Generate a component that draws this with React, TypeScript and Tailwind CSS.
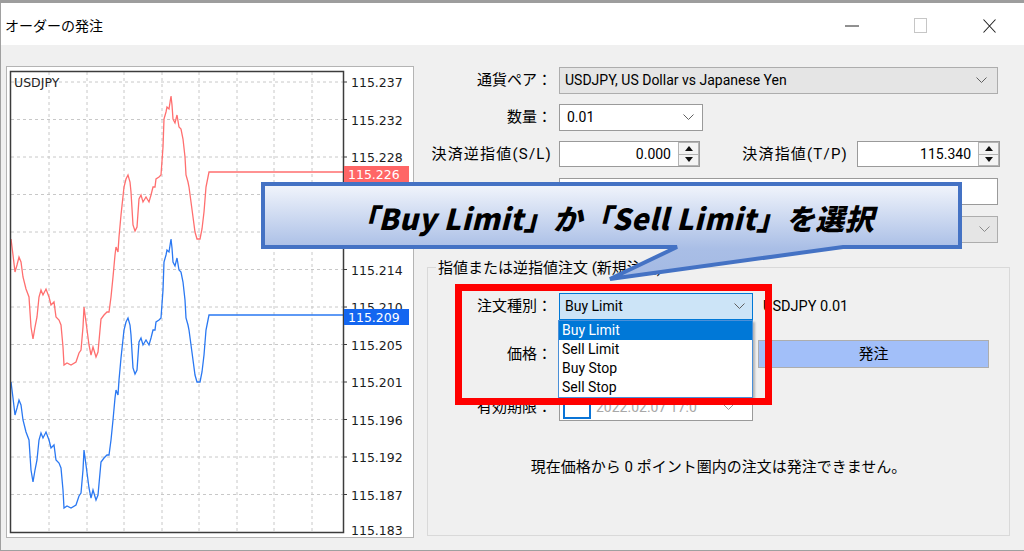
import React from "react";

// blue (bid) line, page coordinates; the red (ask) line is the same shape 143px higher
const BID: [number, number][] = [
  [10, 382], [12, 398], [14, 415], [16, 408], [18, 400], [20, 405], [22, 420], [25, 432],
  [28, 440], [30, 470], [32, 482], [34, 470], [36, 460], [38, 440], [40, 433], [42, 438],
  [45, 432], [48, 440], [50, 448], [53, 445], [55, 460], [58, 463], [60, 468], [62, 490],
  [63, 508], [66, 506], [70, 508], [75, 505], [78, 496], [80, 493], [82, 470], [83, 450],
  [85, 465], [88, 488], [90, 498], [92, 490], [95, 500], [97, 495], [100, 462], [103, 458],
  [106, 455], [108, 455], [110, 440], [112, 420], [114, 398], [115, 390], [117, 395],
  [118, 380], [120, 358], [123, 330], [125, 322], [127, 318], [129, 325], [130, 335],
  [132, 368], [134, 374], [136, 370], [138, 342], [140, 338], [142, 345], [145, 340],
  [148, 345], [150, 338], [152, 330], [154, 330], [155, 322], [158, 320], [160, 318],
  [162, 290], [163, 262], [165, 255], [166, 250], [168, 252], [170, 239], [171, 248],
  [172, 262], [174, 266], [176, 258], [178, 270], [180, 272], [182, 282], [184, 300],
  [185, 318], [187, 325], [188, 330], [190, 345], [192, 360], [194, 375], [196, 382],
  [199, 382], [201, 372], [203, 355], [205, 330], [207, 320], [208, 315], [342, 315],
];

const toPoints = (pts: [number, number][], dy: number) =>
  pts.map(([x, y]) => `${x},${y + dy}`).join(" ");

const GRID_Y = [82, 119.5, 157, 194.5, 232, 269.5, 307, 344.5, 382, 419.5, 457, 494.5];

// 115.223 / 115.219 sit under the callout, so they are left out
const PRICES = [
  { y: 82, v: "115.237" },
  { y: 119.5, v: "115.232" },
  { y: 157, v: "115.228" },
  { y: 269.5, v: "115.214" },
  { y: 307, v: "115.210" },
  { y: 344.5, v: "115.205" },
  { y: 382, v: "115.201" },
  { y: 419.5, v: "115.196" },
  { y: 457, v: "115.192" },
  { y: 494.5, v: "115.187" },
  { y: 530, v: "115.183" },
];

const ChartPanel = () => {
  const gridX = [48, 86, 123, 161, 198, 236, 273, 311];
  return (
    <div className="ml-[5px] mt-[21px] h-[472px] w-[408px] border border-[#b4b4b4] bg-white">
      <svg width="406" height="470" viewBox="6 67 406 470">
        {gridX.map((x) => (
          <line key={x} x1={x} y1={72} x2={x} y2={532} stroke="#c8c8c8" strokeDasharray="3 3" />
        ))}
        {GRID_Y.map((y) => (
          <g key={y}>
            <line x1={10} y1={y} x2={342} y2={y} stroke="#c8c8c8" strokeDasharray="3 3" />
            <line x1={342} y1={y} x2={346} y2={y} stroke="#3c3c3c" />
          </g>
        ))}
        <polyline points={toPoints(BID, -143)} fill="none" stroke="#ff6f6f" strokeWidth="1.3" />
        <polyline points={toPoints(BID, 0)} fill="none" stroke="#2a78f2" strokeWidth="1.3" />
        <rect x="9.5" y="71.5" width="333" height="461" fill="none" stroke="#3c3c3c" strokeWidth="1.5" />
        <text x="13" y="86.5" fontFamily="DejaVu Sans" fontSize="12.5" fill="#222">
          USDJPY
        </text>
        {PRICES.map((p) => (
          <text key={p.v} x="350" y={p.y + 5} fontFamily="DejaVu Sans" fontSize="12.5" fill="#1c1c1c">
            {p.v}
          </text>
        ))}
        <rect x="343" y="166" width="65" height="16" fill="#ff6666" />
        <text x="347" y="179" fontFamily="DejaVu Sans" fontSize="12.5" fill="#fff">
          115.226
        </text>
        <rect x="343" y="309" width="65" height="16" fill="#1466f0" />
        <text x="347" y="322" fontFamily="DejaVu Sans" fontSize="12.5" fill="#fff">
          115.209
        </text>
      </svg>
    </div>
  );
};

const Chevron = ({ color = "#606060" }: { color?: string }) => (
  <svg width="11" height="7" viewBox="0 0 11 7">
    <path d="M0.5 0.5 L5.5 5.5 L10.5 0.5" fill="none" stroke={color} strokeWidth="1" />
  </svg>
);

const SpinBox = ({ value, className }: { value: string; className: string }) => (
  <div className={`flex h-[26px] border border-[#9a9a9a] bg-white ${className}`}>
    <div className="flex flex-1 items-center justify-end pr-[7px] text-[14px]">{value}</div>
    <div className="flex w-[21px] flex-col">
      <div className="flex flex-1 items-center justify-center border border-[#b4b4b4] bg-[#f4f4f4]">
        <svg width="8" height="5" viewBox="0 0 8 5">
          <path d="M0 5 L4 0 L8 5 Z" fill="#111" />
        </svg>
      </div>
      <div className="flex flex-1 items-center justify-center border border-t-0 border-[#b4b4b4] bg-[#f4f4f4]">
        <svg width="8" height="5" viewBox="0 0 8 5">
          <path d="M0 0 L4 5 L8 0 Z" fill="#111" />
        </svg>
      </div>
    </div>
  </div>
);

const Label = ({ text, className }: { text: string; className: string }) => (
  <div className={`shrink-0 text-right text-[15px] ${className}`}>{text}</div>
);

const OrderForm = () => (
  <div className="flex flex-col">
    {/* 通貨ペア */}
    <div className="mt-[22px] flex h-[27px] items-center">
      <Label text="通貨ペア：" className="w-[138px]" />
      <div className="ml-[7px] flex h-[27px] w-[439px] items-center border border-[#adadad] bg-[#e5e5e5] pl-[5px] pr-[10px] text-[14px]">
        <span className="flex-1">USDJPY, US Dollar vs Japanese Yen</span>
        <Chevron />
      </div>
    </div>

    {/* 数量 */}
    <div className="mt-[10px] flex h-[27px] items-center">
      <Label text="数量：" className="w-[138px]" />
      <div className="ml-[7px] flex h-[27px] w-[144px] items-center border border-[#9a9a9a] bg-white pl-[7px] pr-[8px] text-[14px]">
        <span className="flex-1">0.01</span>
        <Chevron />
      </div>
    </div>

    {/* S/L T/P */}
    <div className="mt-[10px] flex h-[26px] items-center">
      <Label text="決済逆指値(S/L)" className="w-[138px] tracking-[1.2px]" />
      <SpinBox value="0.000" className="ml-[7px] w-[141px]" />
      <Label text="決済指値(T/P)" className="w-[157px] pr-[9px] tracking-[1.2px]" />
      <SpinBox value="115.340" className="w-[143px]" />
    </div>

    {/* コメント (covered by the callout) */}
    <div className="mt-[11px] flex h-[27px] items-center">
      <div className="w-[138px] shrink-0" />
      <div className="ml-[7px] h-[27px] w-[439px] border border-[#9a9a9a] bg-white" />
    </div>

    {/* 注文種別 (covered by the callout) */}
    <div className="mt-[11px] flex h-[27px] items-center">
      <div className="w-[138px] shrink-0" />
      <div className="ml-[7px] flex h-[27px] w-[439px] items-center justify-end border border-[#adadad] bg-[#e5e5e5] pr-[7px]">
        <Chevron color="#8a8a8a" />
      </div>
    </div>

    {/* group box */}
    <div className="relative ml-[13px] mt-[24px] flex h-[269px] w-[583px] flex-col border border-[#d9d9d9]">
      <div className="absolute left-[8px] top-[-11px] bg-[#f0f0f0] px-[2px] text-[15px]">
        指値または逆指値注文 (新規注文)
      </div>

      <div className="mt-[25px] flex h-[27px] items-center">
        <Label text="注文種別：" className="w-[124px]" />
        <div className="ml-[7px] flex h-[27px] w-[194px] items-center border border-[#0078d7] bg-[#cce4f7] pl-[5px] pr-[7px] text-[14px]">
          <span className="flex-1">Buy Limit</span>
          <Chevron />
        </div>
        <span className="ml-[10px] text-[14.5px]">USDJPY 0.01</span>
      </div>

      <div className="mt-[20px] flex h-[28px] items-center">
        <Label text="価格：" className="w-[124px]" />
        <div className="ml-[7px] h-[26px] w-[194px] border border-[#9a9a9a] bg-white" />
        <button className="ml-[5px] h-[28px] w-[231px] border border-[#adadad] bg-[#a2bff9] text-[15px]">
          発注
        </button>
      </div>

      <div className="mt-[26px] flex h-[27px] items-center">
        <Label text="有効期限：" className="w-[124px]" />
        <div className="ml-[7px] flex h-[27px] w-[194px] items-center border border-[#9a9a9a] bg-white pl-[3px] pr-[18px]">
          <div className="h-[23px] w-[28px] border-2 border-[#0a74d6] bg-white" />
          <span className="ml-[5px] flex-1 text-[14px] text-[#a8a8a8]">2022.02.07 17:0</span>
          <Chevron color="#9a9a9a" />
        </div>
      </div>

      <div className="mt-[35px] text-center text-[15px]">
        現在価格から 0 ポイント圏内の注文は発注できません。
      </div>
    </div>
  </div>
);

export default function App() {
  return (
    <div className="relative flex h-[551px] w-[1024px] flex-col overflow-hidden bg-[#f0f0f0] font-['Roboto','Noto_Sans_CJK_JP',sans-serif] text-black">
      <div className="h-[3px] bg-[#9d9d9d]" />

      {/* title bar */}
      <div className="flex h-[42px] items-center border-l border-[#a0a0a0] bg-white pl-[4px]">
        <span className="pt-[3px] font-['Noto_Sans_CJK_JP',sans-serif] text-[14px]">オーダーの発注</span>
        <div className="ml-auto flex h-full">
          <div className="flex w-[69px] items-center justify-center pt-[3px]">
            <svg width="14" height="2" viewBox="0 0 14 2">
              <line x1="0" y1="1" x2="14" y2="1" stroke="#222" strokeWidth="1" />
            </svg>
          </div>
          <div className="flex w-[69px] items-center justify-center pt-[3px]">
            <svg width="13" height="15" viewBox="0 0 13 15">
              <rect x="0.5" y="0.5" width="12" height="14" fill="none" stroke="#c6c6c6" />
            </svg>
          </div>
          <div className="flex w-[69px] items-center justify-center pt-[3px]">
            <svg width="13" height="14" viewBox="0 0 13 14">
              <path d="M0.5 0.5 L12.5 13.5 M12.5 0.5 L0.5 13.5" stroke="#222" strokeWidth="1.1" />
            </svg>
          </div>
        </div>
      </div>

      {/* body */}
      <div className="flex flex-1 border-b border-l border-[#a0a0a0]">
        <ChartPanel />
        <OrderForm />
      </div>

      {/* open dropdown list */}
      <div className="absolute left-[558px] top-[320px] flex w-[195px] flex-col border border-[#4a8fd8] bg-white text-[14px] shadow-[2px_2px_2px_rgba(0,0,0,0.25)]">
        <div className="h-[19px] bg-[#0078d7] pl-[3px] leading-[19px] text-white">Buy Limit</div>
        <div className="h-[19px] pl-[3px] leading-[19px]">Sell Limit</div>
        <div className="h-[19px] pl-[3px] leading-[19px]">Buy Stop</div>
        <div className="h-[19px] pl-[3px] leading-[19px]">Sell Stop</div>
      </div>

      {/* red highlight */}
      <div className="absolute left-[455px] top-[284px] h-[121px] w-[317px] border-[7px] border-[#ff0000]" />

      {/* callout */}
      <svg className="pointer-events-none absolute left-0 top-0" width="1024" height="551">
        <defs>
          <linearGradient id="callout" gradientUnits="userSpaceOnUse" x1="0" y1="183" x2="0" y2="280">
            <stop offset="0" stopColor="#f3f6fc" />
            <stop offset="0.68" stopColor="#a9bee6" />
            <stop offset="1" stopColor="#a3b9e3" />
          </linearGradient>
        </defs>
        <path
          d="M263 184 H960 V247 H843 L610 279 L677 247 H263 Z"
          fill="url(#callout)"
          stroke="#4472c4"
          strokeWidth="4"
          strokeLinejoin="miter"
        />
      </svg>
      <div className="absolute left-[263px] top-[184px] flex h-[63px] w-[697px] items-center justify-center pt-[5px] font-['Noto_Sans_CJK_JP',sans-serif] text-[29px] font-black italic tracking-[0.5px]">
        「Buy Limit」か「Sell Limit」を選択
      </div>
    </div>
  );
}
